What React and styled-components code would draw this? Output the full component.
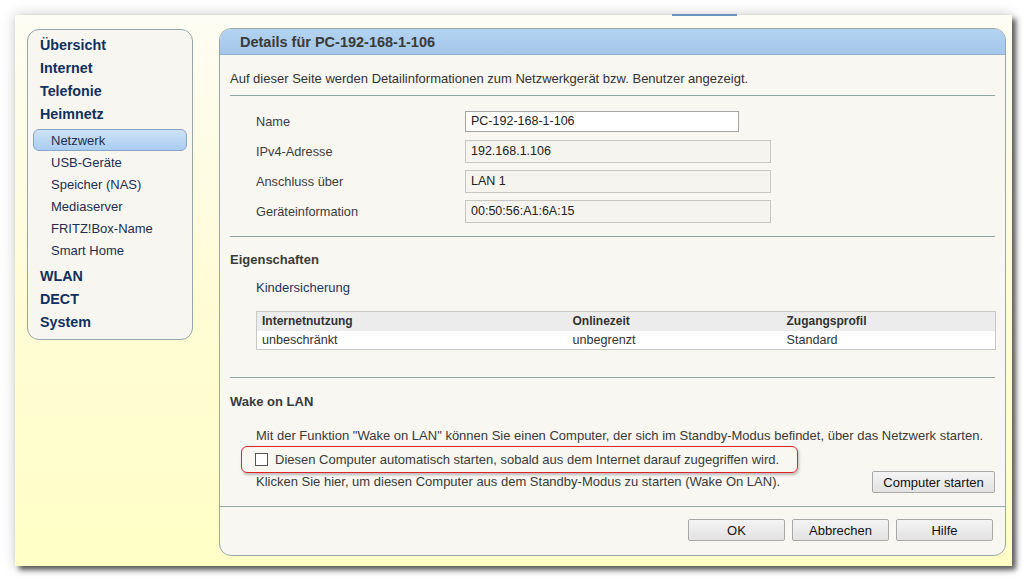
import React from "react";
import styled, { createGlobalStyle } from "styled-components";

const Global = createGlobalStyle`
  html, body { margin: 0; padding: 0; background: #ffffff; }
  body { font-family: "Liberation Sans", Arial, sans-serif; }
  * { box-sizing: border-box; }
`;

const Stage = styled.div`
  width: 1026px;
  height: 582px;
  padding: 15px 14px 16px 15px;
  background: #fff;
`;

const Window = styled.div`
  position: relative;
  width: 997px;
  height: 551px;
  display: flex;
  align-items: flex-start;
  padding: 13px 6px 10px 12px;
  background: linear-gradient(#fdfdf3 0%, #fffcd6 50%, #ffffc6 100%);
  box-shadow: 4px 4px 5px rgba(0, 0, 0, 0.6), 0 0 12px rgba(0, 0, 0, 0.22);
`;

const TabMark = styled.div`
  position: absolute;
  top: -1px;
  left: 657px;
  width: 65px;
  height: 2px;
  background: #6b93c0;
`;

const Nav = styled.nav`
  width: 166px;
  margin-top: 1px;
  padding: 4px 5px 5px 5px;
  background: #f8f6f1;
  border: 1px solid #97a6a6;
  border-radius: 12px;
  display: flex;
  flex-direction: column;
`;

const NavTop = styled.div`
  height: 23px;
  line-height: 23px;
  padding-left: 7px;
  font-size: 14.3px;
  font-weight: bold;
  color: #10305e;
`;

const SubList = styled.div`
  display: flex;
  flex-direction: column;
  margin: 3px 0 4px;
`;

const NavSub = styled.div`
  height: 22px;
  line-height: 21px;
  padding-left: 17px;
  font-size: 13px;
  color: #1c2e52;
  border: 1px solid ${(p) => (p.$active ? "#86a6c8" : "transparent")};
  border-radius: 6px;
  background: ${(p) =>
    p.$active ? "linear-gradient(#cfe2f6, #a9cdf1)" : "transparent"};
`;

const Main = styled.section`
  flex: 1;
  margin-left: 26px;
  height: 528px;
  display: flex;
  flex-direction: column;
  background: #f8f7f2;
  border: 1px solid #9aa8aa;
  border-radius: 12px;
  overflow: hidden;
`;

const Header = styled.div`
  height: 26px;
  flex: none;
  padding-left: 20px;
  display: flex;
  align-items: center;
  background: linear-gradient(#b3d3f1, #a4c6e8);
  border-bottom: 1px solid #93b0cc;
  font-size: 14.5px;
  font-weight: bold;
  color: #3a3a3a;
`;

const Body = styled.div`
  flex: 1;
  padding: 0 10px;
  font-size: 13px;
  color: #333;
`;

const Intro = styled.p`
  margin: 0;
  height: 41px;
  line-height: 47px;
  border-bottom: 1px solid #8ea3a3;
`;

const Form = styled.div`
  display: flex;
  flex-direction: column;
  gap: 7px;
  padding: 14px 0 13px 26px;
  border-bottom: 1px solid #8ea3a3;
`;

const FormRow = styled.div`
  display: flex;
  align-items: center;
  height: 23px;
`;

const Label = styled.span`
  width: 209px;
  font-size: 12.75px;
  color: #3c3c3c;
`;

const Field = styled.div`
  width: ${(p) => (p.$editable ? "274px" : "306px")};
  height: ${(p) => (p.$editable ? "21px" : "23px")};
  line-height: ${(p) => (p.$editable ? "19px" : "21px")};
  padding-left: 5px;
  font-size: 12.5px;
  background: ${(p) => (p.$editable ? "#ffffff" : "#f5f4ef")};
  border: 1px solid ${(p) => (p.$editable ? "#a5a5a5" : "#c6c6c2")};
  color: #222;
`;

const Section = styled.div`
  padding-bottom: ${(p) => p.$pb || 0}px;
  border-bottom: ${(p) => (p.$line ? "1px solid #8ea3a3" : "none")};
`;

const SectionTitle = styled.h4`
  margin: 0;
  height: ${(p) => p.$h}px;
  line-height: ${(p) => p.$lh}px;
  font-size: 13px;
  font-weight: bold;
  color: #3a3a3a;
`;

const SubTitle = styled.div`
  padding-left: 26px;
  height: 28px;
  line-height: 28px;
  color: #1d3560;
`;

const Table = styled.table`
  margin: 9px 0 0 26px;
  width: 740px;
  border-collapse: collapse;
  border: 1px solid #c8c8c6;
  font-size: 12px;
`;

const Th = styled.th`
  text-align: left;
  font-weight: bold;
  background: #ececec;
  height: 19px;
  padding: 0 5px;
  color: #333;
  width: ${(p) => p.$w || "auto"};
`;

const Td = styled.td`
  background: #fff;
  height: 19px;
  padding: 0 5px;
  font-size: 12.6px;
  color: #333;
`;

const Para = styled.div`
  padding-left: 26px;
  height: 22px;
  line-height: 22px;
  color: #3a3a3a;
`;

const CheckRow = styled.label`
  position: relative;
  display: flex;
  align-items: center;
  gap: 7px;
  height: 24px;
  padding-left: 25px;
  color: #3a3a3a;
`;

const Highlight = styled.span`
  position: absolute;
  left: 11px;
  top: -1px;
  width: 557px;
  height: 27px;
  border: 1.5px solid #e0242a;
  border-radius: 6px;
  box-shadow: 1px 2px 3px rgba(0, 0, 0, 0.25);
  pointer-events: none;
`;

const Box = styled.span`
  width: 13px;
  height: 13px;
  border: 1px solid #555;
  background: #fff;
`;

const StartRow = styled.div`
  display: flex;
  align-items: center;
  justify-content: space-between;
  height: 22px;
`;

const Button = styled.button`
  font-family: "Liberation Sans", Arial, sans-serif;
  font-size: 13px;
  color: #111;
  width: ${(p) => p.$w || 97}px;
  height: 22px;
  padding: 0;
  border: 1px solid #a9a9a9;
  border-radius: 2px;
  background: linear-gradient(#f4f4f4, #e2e2e2);
`;

const Footer = styled.div`
  height: 49px;
  flex: none;
  display: flex;
  align-items: center;
  justify-content: flex-end;
  gap: 7px;
  padding-right: 12px;
  padding-bottom: 2px;
  border-top: 1px solid #97a6a6;
`;

export default function App() {
  const subs = ["Netzwerk", "USB-Geräte", "Speicher (NAS)", "Mediaserver", "FRITZ!Box-Name", "Smart Home"];
  const fields = [
    ["Name", "PC-192-168-1-106", true],
    ["IPv4-Adresse", "192.168.1.106", false],
    ["Anschluss über", "LAN 1", false],
    ["Geräteinformation", "00:50:56:A1:6A:15", false],
  ];
  return (
    <Stage>
      <Global />
      <Window>
        <TabMark />
        <Nav>
          <NavTop>Übersicht</NavTop>
          <NavTop>Internet</NavTop>
          <NavTop>Telefonie</NavTop>
          <NavTop>Heimnetz</NavTop>
          <SubList>
            {subs.map((s, i) => (
              <NavSub key={s} $active={i === 0}>{s}</NavSub>
            ))}
          </SubList>
          <NavTop>WLAN</NavTop>
          <NavTop>DECT</NavTop>
          <NavTop>System</NavTop>
        </Nav>
        <Main>
          <Header>Details für PC-192-168-1-106</Header>
          <Body>
            <Intro>Auf dieser Seite werden Detailinformationen zum Netzwerkgerät bzw. Benutzer angezeigt.</Intro>
            <Form>
              {fields.map(([l, v, e]) => (
                <FormRow key={l}>
                  <Label>{l}</Label>
                  <Field $editable={e}>{v}</Field>
                </FormRow>
              ))}
            </Form>
            <Section $line $pb={27}>
              <SectionTitle $h={37} $lh={46}>Eigenschaften</SectionTitle>
              <SubTitle>Kindersicherung</SubTitle>
              <Table>
                <thead>
                  <tr>
                    <Th $w="311px">Internetnutzung</Th>
                    <Th $w="214px">Onlinezeit</Th>
                    <Th>Zugangsprofil</Th>
                  </tr>
                </thead>
                <tbody>
                  <tr>
                    <Td>unbeschränkt</Td>
                    <Td>unbegrenzt</Td>
                    <Td>Standard</Td>
                  </tr>
                </tbody>
              </Table>
            </Section>
            <Section $pb={0}>
              <SectionTitle $h={47} $lh={47}>Wake on LAN</SectionTitle>
              <Para>Mit der Funktion "Wake on LAN" können Sie einen Computer, der sich im Standby-Modus befindet, über das Netzwerk starten.</Para>
              <CheckRow>
                <Highlight />
                <Box />
                Diesen Computer automatisch starten, sobald aus dem Internet darauf zugegriffen wird.
              </CheckRow>
              <StartRow>
                <Para>Klicken Sie hier, um diesen Computer aus dem Standby-Modus zu starten (Wake On LAN).</Para>
                <Button $w={123}>Computer starten</Button>
              </StartRow>
            </Section>
          </Body>
          <Footer>
            <Button>OK</Button>
            <Button>Abbrechen</Button>
            <Button>Hilfe</Button>
          </Footer>
        </Main>
      </Window>
    </Stage>
  );
}
